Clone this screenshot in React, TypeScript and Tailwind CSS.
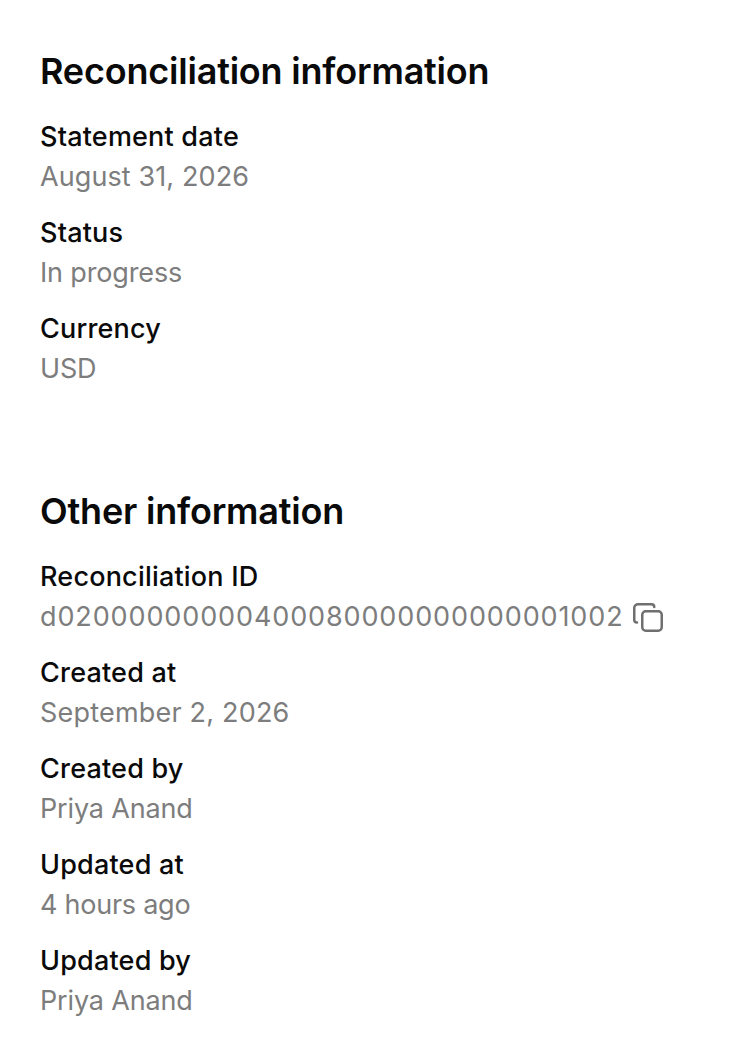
function Field({ label, value, valueClass, copy }: { label: string; value: string; valueClass?: string; copy?: boolean }) {
  return (
    <div className="flex flex-col">
      <div className="h-10 leading-10 text-[27px] font-medium tracking-[0.2px] text-[#0a0a0a]">{label}</div>
      <div className="h-10 leading-10 text-[27px] text-[#7d7d7d] flex items-center gap-2">
        <span className={valueClass ?? 'tracking-[-0.15px]'}>{value}</span>
        {copy && (
          <svg width="32" height="32" viewBox="0 0 32 32" fill="none" stroke="#6f6f6f" strokeWidth="2.5">
            <rect x="10.25" y="10.25" width="19.5" height="19.5" rx="3.5" />
            <path d="M5 21.5 a2.75 2.75 0 0 1-2.75-2.75 V7 a3.75 3.75 0 0 1 3.75-3.75 h13.5 a2.75 2.75 0 0 1 2.75 2.75" strokeLinecap="round" />
          </svg>
        )}
      </div>
    </div>
  )
}

export default function App() {
  return (
    <div className="w-[744px] h-[1044px] bg-white px-10 pt-[47px] font-['Inter',sans-serif] overflow-hidden">
      <h2 className="h-12 leading-[48px] text-[36px] font-semibold tracking-[-0.2px] text-[#0a0a0a]">Reconciliation information</h2>
      <div className="mt-[22px] flex flex-col gap-4">
        <Field label="Statement date" value="August 31, 2026" valueClass="tracking-[0.1px]" />
        <Field label="Status" value="In progress" />
        <Field label="Currency" value="USD" />
      </div>
      <h2 className="mt-[98px] h-12 leading-[48px] text-[36px] font-semibold tracking-[-0.2px] text-[#0a0a0a]">Other information</h2>
      <div className="mt-[22px] flex flex-col gap-4">
        <Field label="Reconciliation ID" value="d02000000000400080000000000001002" valueClass="tracking-[0.88px]" copy />
        <Field label="Created at" value="September 2, 2026" valueClass="tracking-[0.2px]" />
        <Field label="Created by" value="Priya Anand" />
        <Field label="Updated at" value="4 hours ago" valueClass="tracking-[-0.25px]" />
        <Field label="Updated by" value="Priya Anand" />
      </div>
    </div>
  )
}
